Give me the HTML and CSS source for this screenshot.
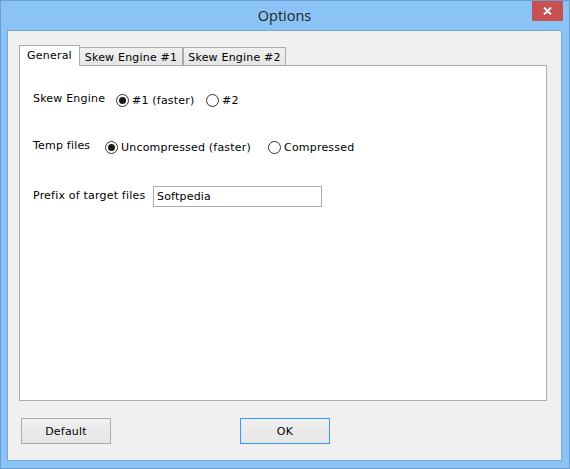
FILE: index.html
```html
<!DOCTYPE html>
<html>
<head>
<meta charset="utf-8">
<title>Options</title>
<link rel="stylesheet" href="styles.css">
</head>
<body>
<div class="window">
  <div class="titlebar"><span class="title">Options</span></div>
  <button class="close" aria-label="Close">
    <svg width="9" height="8" viewBox="0 0 9 8"><path d="M1 0.5 L8 7.5 M8 0.5 L1 7.5" stroke="#fff" stroke-width="1.8" fill="none"/></svg>
  </button>
  <div class="client">
    <div class="tabs">
      <div class="tab-strip">
        <div class="tab tab--active">General</div>
        <div class="tab tab--second">Skew Engine #1</div>
        <div class="tab tab--third">Skew Engine #2</div>
      </div>
      <div class="tab-panel">
        <div class="row row--engine">
          <span class="label label--engine">Skew Engine</span>
          <label class="radio radio--engine1"><span class="dot dot--checked"></span><span class="radio-text">#1 (faster)</span></label>
          <label class="radio"><span class="dot"></span><span class="radio-text">#2</span></label>
        </div>
        <div class="row row--temp">
          <span class="label label--temp">Temp files</span>
          <label class="radio radio--temp1"><span class="dot dot--checked"></span><span class="radio-text">Uncompressed (faster)</span></label>
          <label class="radio"><span class="dot"></span><span class="radio-text">Compressed</span></label>
        </div>
        <div class="row row--prefix">
          <span class="label label--prefix">Prefix of target files</span>
          <div class="textbox">Softpedia</div>
        </div>
      </div>
    </div>
    <div class="buttons">
      <div class="btn btn--default">Default</div>
      <div class="btn btn--ok">OK</div>
    </div>
  </div>
</div>
</body>
</html>
```
FILE: styles.css
```css
* { box-sizing: border-box; }
html, body { margin: 0; padding: 0; }
body {
  width: 570px;
  height: 469px;
  overflow: hidden;
  background: #8ac4f7;
}
.window {
  position: relative;
  width: 570px;
  height: 469px;
  border: 1px solid #6d9dd0;
  background: #8ac4f7;
  padding: 0 7px 7px 6px;
  display: flex;
  flex-direction: column;
  font-family: "DejaVu Sans", sans-serif;
  font-size: 11px;
  letter-spacing: 0.2px;
  color: #000;
}
.titlebar {
  height: 29px;
  display: flex;
  align-items: center;
  justify-content: center;
}
.title {
  font-family: "Open Sans", "Noto Sans", sans-serif;
  font-size: 14.5px;
  letter-spacing: 0;
  color: #252525;
  padding-bottom: 1px;
}
.close {
  position: absolute;
  top: 0;
  right: 6px;
  width: 31px;
  height: 20px;
  border: 0;
  padding: 0;
  background: #c75050;
  display: flex;
  align-items: center;
  justify-content: center;
}
.client {
  flex: 1;
  background: #f0f0f0;
  border: 1px solid #7aa7d8;
  padding: 14px 14px 16px 11px;
  display: flex;
  flex-direction: column;
}
.tabs {
  flex: 1;
  display: flex;
  flex-direction: column;
}
.tab-strip {
  height: 20px;
  display: flex;
  align-items: flex-end;
}
.tab {
  height: 18px;
  border: 1px solid #acacac;
  border-bottom: 0;
  background: linear-gradient(#f0f0f0, #e5e5e5);
  display: flex;
  align-items: center;
  justify-content: center;
  padding-top: 1px;
  white-space: nowrap;
}
.tab--active {
  position: relative;
  z-index: 2;
  width: 61px;
  height: 21px;
  margin-bottom: -1px;
  background: #fff;
  padding-top: 0;
  padding-bottom: 2px;
}
.tab--second {
  width: 104px;
  margin-left: -1px;
}
.tab--third {
  width: 103px;
}
.tab-panel {
  position: relative;
  flex: 1;
  background: #fff;
  border: 1px solid #acacac;
  padding: 24px 0 0 13px;
  overflow: hidden;
}
.row {
  position: relative;
  display: flex;
  align-items: center;
  height: 20px;
}
.row--temp { margin-top: 27px; }
.row--prefix { margin-top: 29px; }
.label {
  flex: none;
  margin-bottom: 4px;
  white-space: nowrap;
}
.label--engine { width: 83px; }
.label--temp { width: 72px; }
.label--prefix { width: 120px; margin-bottom: 2px; }
.radio {
  display: flex;
  align-items: center;
  flex: none;
  white-space: nowrap;
}
.radio--engine1 { width: 90px; }
.radio--temp1 { width: 163px; }
.radio-text {
  margin-left: 3px;
  padding-top: 1px;
}
.dot {
  width: 13px;
  height: 13px;
  border: 1px solid #333;
  border-radius: 50%;
  background: #fff;
  display: flex;
  align-items: center;
  justify-content: center;
}
.dot--checked::after {
  content: "";
  width: 7px;
  height: 7px;
  border-radius: 50%;
  background: #1a1a1a;
}
.textbox {
  width: 169px;
  height: 21px;
  border: 1px solid #abadb3;
  background: #fff;
  padding: 0 0 0 3px;
  display: flex;
  align-items: center;
}
.buttons {
  margin-top: 17px;
  height: 26px;
  display: flex;
}
.btn {
  height: 26px;
  width: 90px;
  border: 1px solid #acacac;
  background: linear-gradient(#f0f0f0, #e5e5e5);
  display: flex;
  align-items: center;
  justify-content: center;
  padding-top: 1px;
}
.btn--default { margin-left: 2px; }
.btn--ok {
  margin-left: 129px;
  border-color: #3399ff;
}
```
